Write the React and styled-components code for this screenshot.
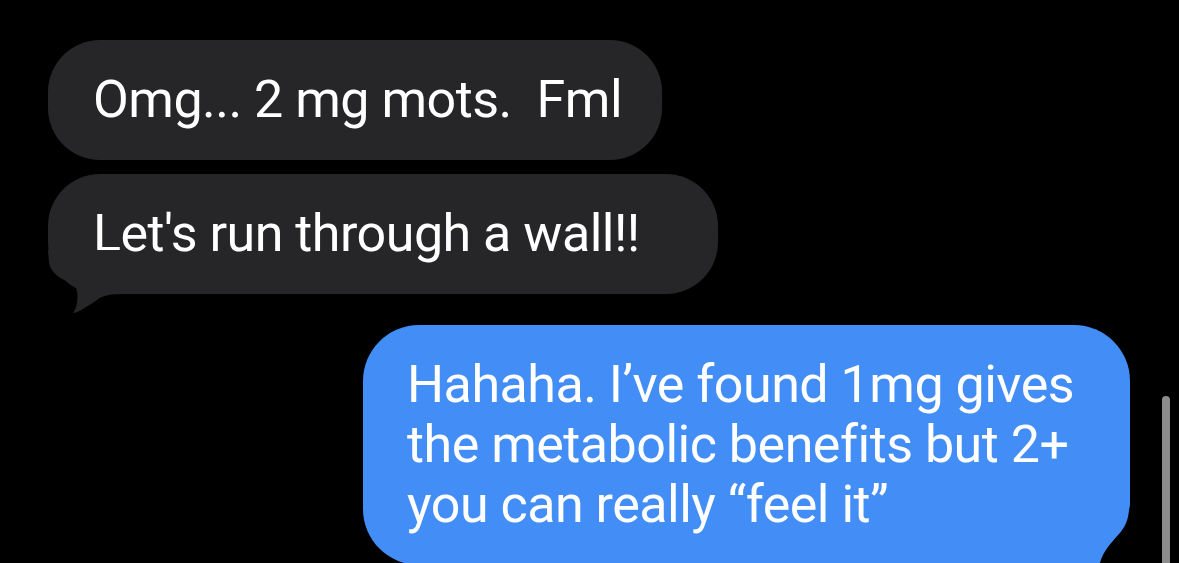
import React from "react";
import styled, { createGlobalStyle } from "styled-components";

const Global = createGlobalStyle`
  html, body {
    margin: 0;
    padding: 0;
    height: 100%;
    overflow: hidden;
    background: #000;
  }
  body {
    font-family: Roboto, Inter, "Noto Sans", "Liberation Sans", sans-serif;
    -webkit-font-smoothing: antialiased;
  }
`;

const Screen = styled.main`
  position: relative;
  height: 100vh;
  box-sizing: border-box;
  padding: 40px 49px 0 48px;
  display: flex;
  flex-direction: column;
  gap: 31px;
  background: #000;
`;

const Group = styled.section`
  display: flex;
  flex-direction: column;
  gap: 14px;
  align-items: ${(p) => (p.$sent ? "flex-end" : "flex-start")};
`;

const Bubble = styled.div`
  position: relative;
  box-sizing: border-box;
  width: ${(p) => p.$w}px;
  padding: 30px 0 30px ${(p) => (p.$sent ? 44 : 45)}px;
  border-radius: ${(p) => (p.$sent ? "56px 56px 0 56px" : "52px")};
  background: ${(p) => (p.$sent ? "#438ef6" : "#262629")};
  color: #fff;
  font-size: 52px;
  line-height: 60px;
  letter-spacing: -0.5px;
  white-space: pre-wrap;
`;

const Tail = styled.svg`
  position: absolute;
  left: 0;
  top: 76px;
  width: 80px;
  height: 64px;
  overflow: visible;
`;

const Carve = styled.svg`
  position: absolute;
  right: 0;
  top: 180px;
  width: 32px;
  height: 80px;
`;

const ScrollIndicator = styled.div`
  position: absolute;
  right: 9px;
  top: 396px;
  bottom: -10px;
  width: 8px;
  border-radius: 4px;
  background: #8c8c8c;
`;

export default function App() {
  return (
    <>
      <Global />
      <Screen>
        <Group>
          <Bubble $w={614}>{"Omg... 2 mg mots.  Fml"}</Bubble>
          <Bubble $w={670}>
            Let's run through a wall!!
            <Tail viewBox="0 0 80 64">
              <path
                d="M0,0 L1,12 C3,25 15,30 25,33 C31,38 31,55 25,63 C28,64 40,56 49,50 C55,45 62,44 80,44 L80,0 Z"
                fill="#262629"
              />
            </Tail>
          </Bubble>
        </Group>
        <Group $sent>
          <Bubble $sent $w={767}>
            Hahaha. I’ve found 1mg gives
            <br />
            the metabolic benefits but 2+
            <br />
            you can really “feel it”
            <Carve viewBox="0 0 32 80">
              <path
                d="M32,0 L31,5 C30,16 27,22 21,29 C13,38 5,46 2,58 L2,80 L32,80 Z"
                fill="#000"
              />
            </Carve>
          </Bubble>
        </Group>
        <ScrollIndicator />
      </Screen>
    </>
  );
}
